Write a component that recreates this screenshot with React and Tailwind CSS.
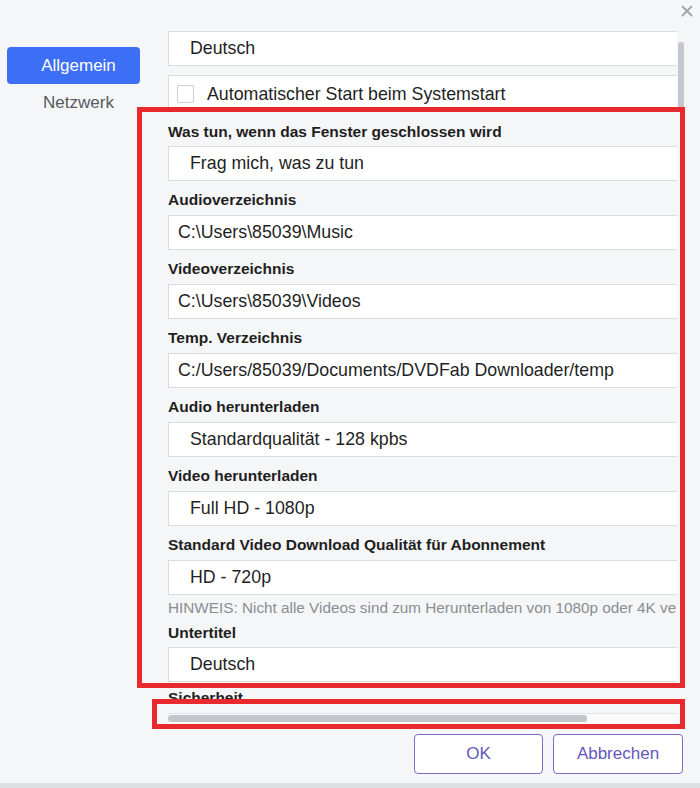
import { X } from "lucide-react";

const font = { fontFamily: '"Liberation Sans", Arial, sans-serif' };

const Field = ({ children, inset = "pl-[21px]" }) => (
  <div className={`h-[35px] w-[560px] bg-white border border-[#dcdcdc] flex items-center text-[17.8px] text-[#1f1f1f] whitespace-nowrap ${inset}`}>
    {children}
  </div>
);

const Label = ({ children, first }) => (
  <div className={`${first ? "mt-[11px] mb-[4px]" : "mt-[9px] mb-[5px]"} h-5 leading-5 text-[15.5px] font-bold text-[#1f1f1f] whitespace-nowrap`}>
    {children}
  </div>
);

const App = () => {
  return (
    <div className="w-[700px] h-[788px] bg-[#f5f6f8] flex flex-col relative overflow-hidden" style={font}>
      {/* header */}
      <div className="h-[31px] flex justify-end pr-[4px] pt-[2px]">
        <X className="w-[18px] h-[18px] text-[#a3a3a8]" strokeWidth={2.4} />
      </div>

      <div className="flex flex-1 min-h-0">
        {/* SIDEBAR */}
        <div className="w-[168px] shrink-0 pl-[7px] pt-[16px]">
          <div className="w-[133px] h-[37px] pl-[10px] rounded-[4px] bg-[#3c6ff5] text-white text-[17px] flex items-center justify-center">
            Allgemein
          </div>
          <div className="w-[133px] pl-[10px] mt-[9px] h-5 leading-5 text-center text-[17px] text-[#555a60]">
            Netzwerk
          </div>
        </div>

        {/* CONTENT */}
        <div className="flex-1 flex flex-col">
          <div className="flex h-[679px]">
            <div className="w-[509px] overflow-hidden">
              <Field>Deutsch</Field>
              <div className="mt-[9px] h-[36px] w-[560px] bg-white border border-[#dcdcdc] flex items-center pl-[8px] pt-[2px] text-[17.8px] text-[#1f1f1f] whitespace-nowrap">
                <span className="w-[17px] h-[18px] border border-[#cfcfcf] bg-white rounded-[1px]" />
                <span className="ml-[13px]">Automatischer Start beim Systemstart</span>
              </div>

              <Label first>Was tun, wenn das Fenster geschlossen wird</Label>
              <Field>Frag mich, was zu tun</Field>

              <Label>Audioverzeichnis</Label>
              <Field inset="pl-[9px]">C:\Users\85039\Music</Field>

              <Label>Videoverzeichnis</Label>
              <Field inset="pl-[9px]">C:\Users\85039\Videos</Field>

              <Label>Temp. Verzeichnis</Label>
              <Field inset="pl-[9px]">C:/Users/85039/Documents/DVDFab Downloader/temp</Field>

              <Label>Audio herunterladen</Label>
              <Field>Standardqualität - 128 kpbs</Field>

              <Label>Video herunterladen</Label>
              <Field>Full HD - 1080p</Field>

              <Label>Standard Video Download Qualität für Abonnement</Label>
              <Field>HD - 720p</Field>

              <div className="mt-[3px] h-5 leading-5 text-[15.3px] text-[#8a8d92] whitespace-nowrap">
                HINWEIS: Nicht alle Videos sind zum Herunterladen von 1080p oder 4K verfügbar.
              </div>

              <div className="mt-[5px] mb-[4px] h-5 leading-5 text-[15.5px] font-bold text-[#1f1f1f]">Untertitel</div>
              <Field>Deutsch</Field>

              <div className="mt-[6px] h-5 leading-5 text-[15.5px] font-bold text-[#1f1f1f]">Sicherheit</div>
              <div className="mt-[4px]">
                <Field>Standard</Field>
              </div>
            </div>
            {/* vertical scrollbar */}
            <div className="w-[6px] ml-[1px] pt-[11px]">
              <div className="w-[6px] h-[70px] rounded-[3px] bg-[#c6c6ce]" />
            </div>
          </div>

          {/* horizontal scrollbar */}
          <div className="w-[509px] h-[13px] mt-[3px] border-t border-[#e2e3e6] bg-[#fafafb] pt-[1px]">
            <div className="w-[419px] h-[7px] rounded-[3px] bg-[#c4c4cc]" />
          </div>

          {/* BUTTONS */}
          <div className="flex justify-end gap-[10px] pr-[17px] mt-[10px]">
            <button className="w-[129px] h-[40px] rounded-[4px] border-[1.5px] border-[#7a6cc9] bg-white text-[17px] text-[#6358bd]">
              OK
            </button>
            <button className="w-[130px] h-[40px] rounded-[4px] border-[1.5px] border-[#7a6cc9] bg-white text-[17px] text-[#6358bd]">
              Abbrechen
            </button>
          </div>
        </div>
      </div>

      <div className="h-[5px] mt-[9px] bg-[#dddee1]" />

      {/* annotation overlays */}
      <div className="absolute left-[137px] top-[107px] w-[548px] h-[581px] border-[5px] border-[#e82a2f] pointer-events-none" />
      <div className="absolute left-[152px] top-[699px] w-[533px] h-[30px] border-[5px] border-[#e82a2f] pointer-events-none" />
    </div>
  );
};

export default App;
